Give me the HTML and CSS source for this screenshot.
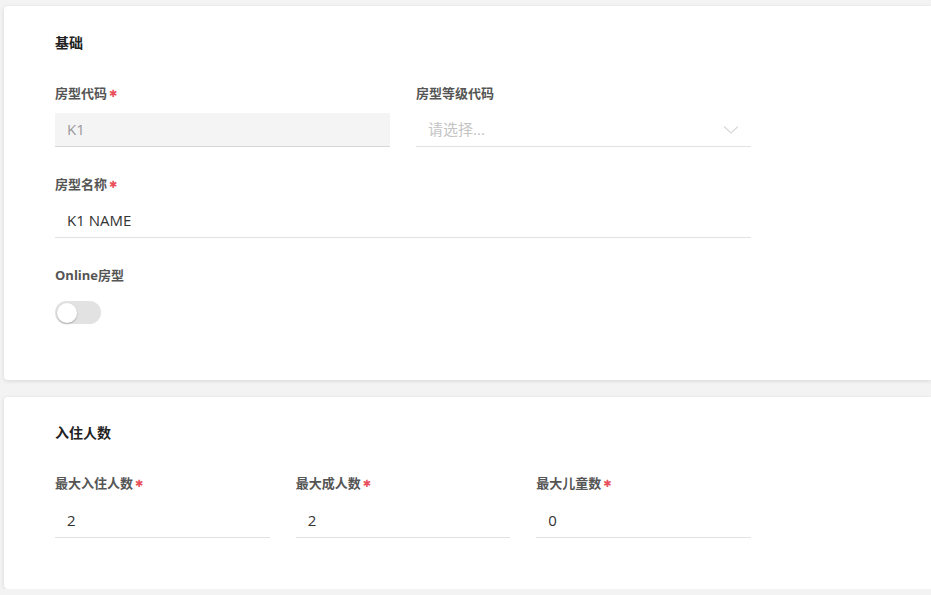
FILE: index.html
```html
<!DOCTYPE html>
<html lang="zh-CN">
<head>
    <meta charset="UTF-8">
    <title>房型</title>
    <link rel="stylesheet" href="styles.css">
</head>
<body>
    <div class="page">
        <div class="card card-basic">
            <h3 class="card-title">基础</h3>
            <div class="row cols-2">
                <div class="field">
                    <label class="field-label">房型代码<span class="req">✱</span></label>
                    <div class="input disabled">K1</div>
                </div>
                <div class="field">
                    <label class="field-label">房型等级代码</label>
                    <div class="input select">
                        <span class="placeholder">请选择...</span>
                        <svg class="chevron" width="16" height="10" viewBox="0 0 16 10"><path d="M1 1.5 L8 8 L15 1.5" fill="none" stroke="#d8d8d8" stroke-width="1.2"/></svg>
                    </div>
                </div>
            </div>
            <div class="row">
                <div class="field">
                    <label class="field-label">房型名称<span class="req">✱</span></label>
                    <div class="input">K1 NAME</div>
                </div>
            </div>
            <div class="row last">
                <div class="field">
                    <label class="field-label">Online房型</label>
                    <div class="toggle"><span class="knob"></span></div>
                </div>
            </div>
        </div>

        <div class="card card-guests">
            <h3 class="card-title">入住人数</h3>
            <div class="row cols-3 last">
                <div class="field">
                    <label class="field-label">最大入住人数<span class="req">✱</span></label>
                    <div class="input">2</div>
                </div>
                <div class="field">
                    <label class="field-label">最大成人数<span class="req">✱</span></label>
                    <div class="input">2</div>
                </div>
                <div class="field">
                    <label class="field-label">最大儿童数<span class="req">✱</span></label>
                    <div class="input">0</div>
                </div>
            </div>
        </div>
    </div>
</body>
</html>
```

FILE: styles.css
```css
* {
    box-sizing: border-box;
    margin: 0;
    padding: 0;
}

body {
    font-family: "Open Sans", "Noto Sans CJK SC", sans-serif;
    background: #f3f3f3;
    overflow: hidden;
}

.page {
    padding: 6px 0 0 4px;
    display: flex;
    flex-direction: column;
    gap: 17px;
}

.card {
    background: #fff;
    border-radius: 4px 0 0 4px;
    box-shadow: 0 1px 4px rgba(0, 0, 0, 0.12);
    padding: 27px 0 0 51px;
}

.card-basic {
    height: 374px;
}

.card-guests {
    height: 192px;
    padding-top: 26px;
}

.card-title {
    font-size: 14px;
    line-height: 20px;
    font-weight: 700;
    color: #222;
    margin-bottom: 31px;
}

.card-guests .card-title {
    margin-bottom: 31px;
}

.row {
    width: 696px;
    margin-bottom: 28px;
}

.row.last {
    margin-bottom: 0;
}

.cols-2 {
    display: grid;
    grid-template-columns: 1fr 1fr;
    column-gap: 26px;
}

.cols-3 {
    display: grid;
    grid-template-columns: 1fr 1fr 1fr;
    column-gap: 26px;
}

.field-label {
    display: block;
    height: 18px;
    font-size: 13px;
    line-height: 18px;
    font-weight: 700;
    color: #555;
    margin-bottom: 11px;
}

.card-guests .field-label {
    margin-bottom: 12px;
}

.req {
    font-family: "DejaVu Sans", sans-serif;
    font-size: 10px;
    line-height: 1;
    color: #e8505b;
    margin-left: 2px;
    vertical-align: 1px;
}

.input {
    height: 34px;
    line-height: 33px;
    padding: 0 12px;
    font-size: 15px;
    color: #333;
    border-bottom: 1px solid #e2e2e2;
}

.input.disabled {
    background: #f4f4f4;
    color: #9a9a9a;
    border-bottom-color: #d6d6d6;
}

.input.select {
    display: flex;
    align-items: center;
    justify-content: space-between;
}

.placeholder {
    color: #c4c4c4;
}

.toggle {
    margin-top: 17px;
    width: 46px;
    height: 23px;
    border-radius: 12px;
    background: #e2e2e2;
    display: flex;
    align-items: center;
    padding-left: 2px;
}

.knob {
    width: 20px;
    height: 20px;
    border-radius: 50%;
    background: #fff;
    box-shadow: 0 1px 2px rgba(0, 0, 0, 0.25);
}
```
